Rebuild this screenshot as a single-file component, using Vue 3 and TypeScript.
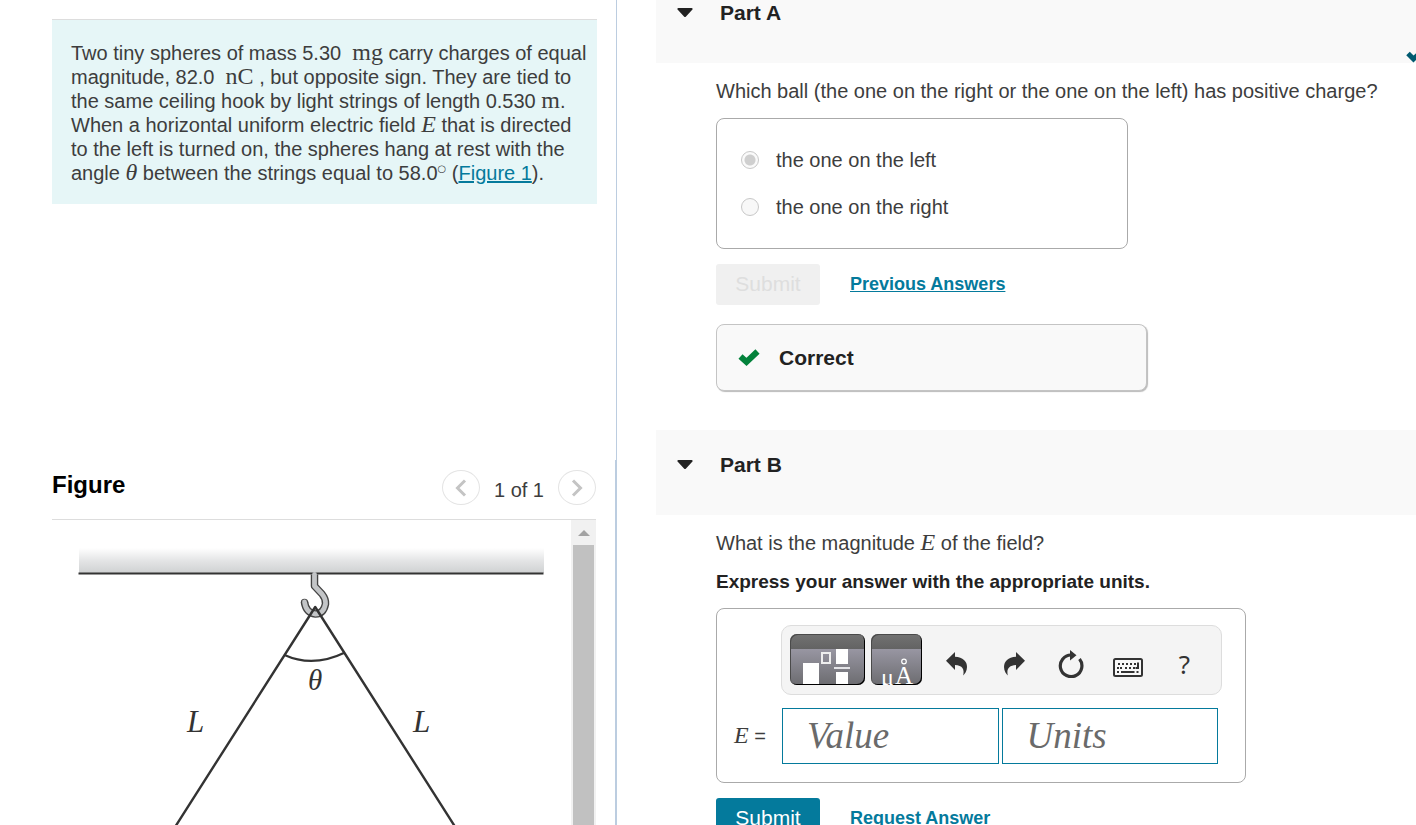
<script setup lang="ts">
import { ref } from 'vue'

const choices = [
  { id: 'left', label: 'the one on the left' },
  { id: 'right', label: 'the one on the right' },
]
const picked = ref('left')
const magnitude = ref('')
const units = ref('')

const keyDots: number[][] = [
  [5, 5], [9, 5], [13, 5], [17, 5], [21, 5],
  [7, 9], [12, 9], [16, 9], [20, 9],
]
</script>

<template>
  <div class="page">
    <aside class="left">
      <div class="top-pane">
        <section class="problem">
          Two tiny spheres of mass 5.30 &nbsp;<span class="rm">mg</span> carry charges of equal
          magnitude, 82.0 &nbsp;<span class="rm">nC</span> , but opposite sign. They are tied to
          the same ceiling hook by light strings of length 0.530 <span class="rm">m</span>.
          When a horizontal uniform electric field <i class="rm">E</i> that is directed
          to the left is turned on, the spheres hang at rest with the
          angle <i class="rm">θ</i> between the strings equal to 58.0<span class="deg">○</span> (<a href="#figure">Figure 1</a>).
        </section>
      </div>
      <section id="figure" class="figure">
        <header class="figure-head">
          <h2>Figure</h2>
          <nav class="pager" aria-label="Figure pages">
            <button type="button" aria-label="Previous figure">
              <svg width="12" height="18" viewBox="0 0 12 18"><path d="M10 1.500L2.500 9L10 16.500" /></svg>
            </button>
            <span>1 of 1</span>
            <button type="button" aria-label="Next figure">
              <svg width="12" height="18" viewBox="0 0 12 18"><path d="M2 1.500L9.500 9L2 16.500" /></svg>
            </button>
          </nav>
        </header>
        <div class="figure-body">
          <svg class="diagram" viewBox="52 520 519 305" preserveAspectRatio="xMidYMin slice" role="img" aria-label="Two strings hanging from a ceiling hook">
            <defs>
              <linearGradient id="slab" x1="0" y1="0" x2="0" y2="1">
                <stop offset="0" stop-color="#ffffff" />
                <stop offset="0.5" stop-color="#e4e5e6" />
                <stop offset="1" stop-color="#cfd1d2" />
              </linearGradient>
            </defs>
            <rect x="79" y="548" width="465" height="25" fill="url(#slab)" />
            <path d="M78.500 573.500H543.500" stroke="#333" stroke-width="2" />
            <g fill="none" stroke-linejoin="round">
              <path d="M314.500 574.500V586L322 594Q326 599 325.500 604Q323.500 614 315.500 614Q306 613 304.500 602" stroke="#444" stroke-width="7.500" />
              <circle cx="304.500" cy="602.500" r="3.700" fill="#444" />
              <path d="M314.500 574.500V586L322 594Q326 599 325.500 604Q323.500 614 315.500 614Q306 613 304.500 602" stroke="#c3c5c7" stroke-width="4.800" stroke-linecap="round" />
              <path d="M175.700 826L315.200 607L454.600 826" stroke="#333" stroke-width="2.400" />
              <path d="M284.500 655Q313 668 345 652.500" stroke="#333" stroke-width="2.200" />
            </g>
            <text x="187" y="732" font-size="31">L</text>
            <text x="413" y="732" font-size="31">L</text>
            <text x="308" y="690" font-size="29">θ</text>
          </svg>
          <div class="scrollbar" aria-hidden="true">
            <span class="scroll-arrow"></span>
            <span class="scroll-thumb"></span>
          </div>
        </div>
      </section>
    </aside>

    <main class="right">
      <section>
        <header class="part-head">
          <button type="button" class="caret" aria-label="Collapse Part A">
            <svg width="16" height="10" viewBox="0 0 16 10"><path d="M1.500 0H14.500Q16.500 0.500 15 2L9 8.500Q8 9.500 7 8.500L1 2Q-0.500 0.500 1.500 0Z" /></svg>
          </button>
          <h2>Part A</h2>
          <svg class="done" width="22" height="18" viewBox="0 0 22 18"><path d="M3 6.500L8.500 12L19 2" /></svg>
        </header>
        <div class="part-body">
          <p class="question">Which ball (the one on the right or the one on the left) has positive charge?</p>
          <div class="choices" role="radiogroup" aria-label="Which ball has positive charge">
            <label v-for="c in choices" :key="c.id" class="choice">
              <input v-model="picked" type="radio" name="ball" :value="c.id" disabled />
              <span>{{ c.label }}</span>
            </label>
          </div>
          <div class="actions">
            <button type="button" class="submit" disabled>Submit</button>
            <a href="#previous">Previous Answers</a>
          </div>
          <div class="result">
            <svg width="22" height="18" viewBox="0 0 22 18"><path d="M2.500 7.500L8.500 13L19.500 2.500" /></svg>
            <strong>Correct</strong>
          </div>
        </div>
      </section>

      <section>
        <header class="part-head">
          <button type="button" class="caret" aria-label="Collapse Part B">
            <svg width="16" height="10" viewBox="0 0 16 10"><path d="M1.500 0H14.500Q16.500 0.500 15 2L9 8.500Q8 9.500 7 8.500L1 2Q-0.500 0.500 1.500 0Z" /></svg>
          </button>
          <h2>Part B</h2>
        </header>
        <div class="part-body">
          <p class="question">What is the magnitude <i class="rm">E</i> of the field?</p>
          <p class="hint">Express your answer with the appropriate units.</p>
          <div class="answer">
            <div class="toolbar">
              <button type="button" class="tile" aria-label="Templates">
                <svg width="75" height="51" viewBox="0 0 75 51">
                  <rect x="13" y="29" width="16" height="21" fill="#fff" />
                  <rect x="32" y="19" width="8" height="10" fill="none" stroke="#eee" stroke-width="2" />
                  <rect x="46" y="15" width="12" height="15" fill="#fff" />
                  <path d="M44 34H60" stroke="#e4e4e8" stroke-width="2" />
                  <rect x="46" y="38" width="12" height="12" fill="#fff" />
                </svg>
              </button>
              <button type="button" class="tile" aria-label="Symbols">
                <svg width="51" height="51" viewBox="0 0 51 51" fill="#fff">
                  <text x="10" y="51" font-size="24">μ</text>
                  <text x="24" y="50" font-size="25">A</text>
                  <circle cx="33" cy="27.500" r="2.300" fill="none" stroke="#fff" stroke-width="1.200" />
                </svg>
              </button>
              <button type="button" class="tool" aria-label="Undo">
                <svg width="22" height="24" viewBox="0 0 22 24"><path d="M0 8.700L9 0V4.800C17 5.200 21 9.500 21 15C21 19 18.800 22 17.200 23.500C18.600 17.500 16.500 13.300 9 13V18Z" /></svg>
              </button>
              <button type="button" class="tool" aria-label="Redo">
                <svg width="22" height="24" viewBox="0 0 22 24"><path d="M22 8.700L13 0V4.800C5 5.200 1 9.500 1 15C1 19 3.200 22 4.800 23.500C3.400 17.500 5.500 13.300 13 13V18Z" /></svg>
              </button>
              <button type="button" class="tool" aria-label="Reset">
                <svg width="26" height="28" viewBox="0 0 26 28">
                  <path d="M13 5A10.800 10.800 0 1 0 21.500 9" fill="none" stroke="#333" stroke-width="3.200" />
                  <path d="M12 0L18.500 5.200L12 10.400Z" />
                </svg>
              </button>
              <button type="button" class="tool keys" aria-label="Keyboard shortcuts">
                <svg width="30" height="19" viewBox="0 0 30 19">
                  <rect x="1" y="1" width="28" height="17" rx="1.500" fill="#f9f9f9" stroke="#333" stroke-width="2" />
                  <rect v-for="(d, i) in keyDots" :key="i" :x="d[0]" :y="d[1]" width="2" height="2" />
                  <path d="M24 4.500H26V11H22.500V9H24ZM4 9H6V11H4ZM4 13H6V15H4ZM8 13H21.500V15H8ZM23.500 13H25.500V15H23.500Z" />
                </svg>
              </button>
              <button type="button" class="tool help" aria-label="Help">?</button>
            </div>
            <label class="lhs" for="value"><i class="rm">E</i> =</label>
            <div class="fields">
              <input id="value" v-model="magnitude" type="text" placeholder="Value" />
              <input v-model="units" type="text" placeholder="Units" aria-label="Units" />
            </div>
          </div>
          <div class="actions">
            <button type="button" class="submit">Submit</button>
            <a href="#request">Request Answer</a>
          </div>
        </div>
      </section>
    </main>
  </div>
</template>

<style>
body {
  margin: 0;
  background: #fff;
}
</style>

<style scoped>
.page {
  display: grid;
  grid-template-columns: 617fr 799fr;
  grid-template-rows: minmax(0, 1fr);
  height: 100vh;
  overflow: hidden;
  font-family: "Liberation Sans", Arial, sans-serif;
  font-size: 20px;
  line-height: 24px;
  color: #3d3d3d;
}
.page * {
  box-sizing: border-box;
}
h2,
p {
  margin: 0;
}
button {
  font: inherit;
  border: 0;
  padding: 0;
}
a {
  color: #047a9c;
  text-decoration: underline;
}
svg {
  display: block;
}
.rm {
  font-family: "Liberation Serif", "Times New Roman", serif;
  font-size: 24px;
  line-height: 20px;
}

.left {
  display: grid;
  grid-template-rows: 460fr 365fr;
  min-width: 0;
  min-height: 0;
}
.top-pane {
  border-right: 1px solid #bccde0;
  padding: 19px 19px 0 52px;
}
.problem {
  padding: 21px 4px 19px 19px;
  border-top: 1px solid #ddd;
  background: #e6f6f7;
}
.deg {
  font-family: "DejaVu Sans", sans-serif;
  font-size: 10px;
  line-height: 10px;
  vertical-align: 8px;
}

.figure {
  display: flex;
  flex-direction: column;
  min-height: 0;
  padding: 0 19px 0 52px;
  border-right: 2px solid #bccde0;
}
.figure-head {
  display: flex;
  justify-content: space-between;
  padding: 10px 0 14px;
  border-bottom: 1px solid #ddd;
}
.figure-head h2 {
  font-size: 24px;
  line-height: 30px;
  color: #000;
}
.pager {
  display: flex;
  align-items: center;
  gap: 14px;
}
.pager span {
  padding-top: 4px;
}
.pager button {
  display: grid;
  place-items: center;
  width: 38px;
  height: 35px;
  border: 1px solid #e4e4e4;
  border-radius: 50%;
  background: #fff;
}
.pager path {
  fill: none;
  stroke: #c4c4c4;
  stroke-width: 3;
}
.figure-body {
  display: flex;
  flex: 1;
  min-height: 0;
}
.diagram {
  flex: 1;
  min-width: 0;
  height: 100%;
}
.diagram text {
  font-family: "Liberation Serif", "Times New Roman", serif;
  font-style: italic;
  fill: #333;
}
.scrollbar {
  display: flex;
  flex-direction: column;
  align-items: center;
  width: 25px;
  background: #f1f1f1;
}
.scroll-arrow {
  margin: 10px 0 9px;
  border: 6px solid transparent;
  border-top: 0;
  border-bottom-color: #a3a3a3;
}
.scroll-thumb {
  flex: 1;
  width: 21px;
  background: #c1c1c1;
}

/* The answer column is shown scrolled a little past its top. */
.right {
  min-width: 0;
  margin-top: -22px;
  padding-left: 39px;
}
.part-head {
  position: relative;
  display: flex;
  align-items: flex-start;
  gap: 27px;
  height: 85px;
  padding: 23px 0 0 21px;
  background: #f9f9f9;
  overflow: hidden;
}
.part-head h2 {
  font-size: 21px;
  line-height: 24px;
  color: #222;
}
.caret {
  display: grid;
  place-items: center;
  height: 24px;
  background: none;
}
.caret path {
  fill: #222;
}
.done {
  position: absolute;
  right: -11px;
  bottom: -2px;
}
.done path {
  fill: none;
  stroke: #005a70;
  stroke-width: 5;
}
.part-body {
  padding: 16px 20px 39px 60px;
}
.question {
  margin-bottom: 15px;
}
.hint {
  margin-bottom: 14px;
  font-weight: bold;
  font-size: 19px;
  color: #222;
}
.choices {
  max-width: 412px;
  padding: 17px 24px 18px;
  border: 1px solid #aaa;
  border-radius: 8px;
}
.choice {
  display: flex;
  align-items: center;
  gap: 17px;
  height: 47px;
}
.choice input {
  appearance: none;
  width: 18px;
  height: 18px;
  margin: 0;
  border: 1px solid #c8c8c8;
  border-radius: 50%;
  background: #f8f8f8;
}
.choice input:checked {
  background: radial-gradient(circle, #cfcfcf 5px, #fafafa 6px);
}
.actions {
  display: flex;
  align-items: center;
  gap: 30px;
  margin-top: 15px;
}
.submit {
  width: 104px;
  height: 41px;
  padding-bottom: 2px;
  border-radius: 3px;
  background: #047a9c;
  color: #fff;
  font-size: 21px;
}
.submit:disabled {
  background: #f0f0f0;
  color: #dedede;
}
.actions a {
  padding-bottom: 2px;
  font-size: 18px;
  font-weight: bold;
}
.result {
  display: flex;
  align-items: center;
  gap: 19px;
  max-width: 431px;
  height: 67px;
  margin-top: 19px;
  padding: 0 21px;
  border: 1px solid #c4c4c4;
  border-radius: 8px;
  background: #f9f9f9;
  box-shadow: 1px 1px 1px #bbb;
  color: #222;
  font-size: 21px;
}
.result path {
  fill: none;
  stroke: #03823b;
  stroke-width: 6;
}

.answer {
  display: grid;
  grid-template-columns: 47px 1fr;
  row-gap: 13px;
  max-width: 530px;
  padding: 16px 23px 18px 17px;
  border: 1px solid #aaa;
  border-radius: 8px;
}
.toolbar {
  grid-column: 2;
  display: flex;
  align-items: flex-start;
  height: 70px;
  padding: 8px;
  border: 1px solid #ddd;
  border-radius: 10px;
  background: #f4f4f4;
}
.tile {
  flex: none;
  height: 51px;
  margin-right: 6px;
  border-radius: 7px;
  background: linear-gradient(#727272 0, #636363 15px, #9896a2 15px, #6c6c70 100%);
  box-shadow: inset -1px -1px 0 #000, inset 1px 1px 0 #4a4a4a;
  overflow: hidden;
}
.tile text {
  font-family: "Liberation Serif", "Times New Roman", serif;
}
.tool {
  display: grid;
  place-items: center;
  flex: 1;
  height: 51px;
  padding-top: 8px;
  background: none;
}
.tool svg {
  fill: #333;
}
.tool.keys {
  padding-top: 16px;
}
.help {
  font-family: "Noto Sans", sans-serif;
  font-size: 26px;
  color: #333;
}
.lhs {
  align-self: center;
  white-space: nowrap;
}
.fields {
  display: grid;
  grid-template-columns: 1fr 1fr;
  gap: 3px;
  padding: 0 4px 0 1px;
}
.fields input {
  width: 100%;
  min-width: 0;
  height: 56px;
  padding: 0 24px 2px;
  border: 1px solid #047a9c;
  border-radius: 0;
  background: #fff;
  font-family: "Liberation Serif", "Times New Roman", serif;
  font-size: 37px;
  color: #222;
}
.fields input::placeholder {
  font-style: italic;
  color: #6a6a6a;
  opacity: 1;
}
</style>
